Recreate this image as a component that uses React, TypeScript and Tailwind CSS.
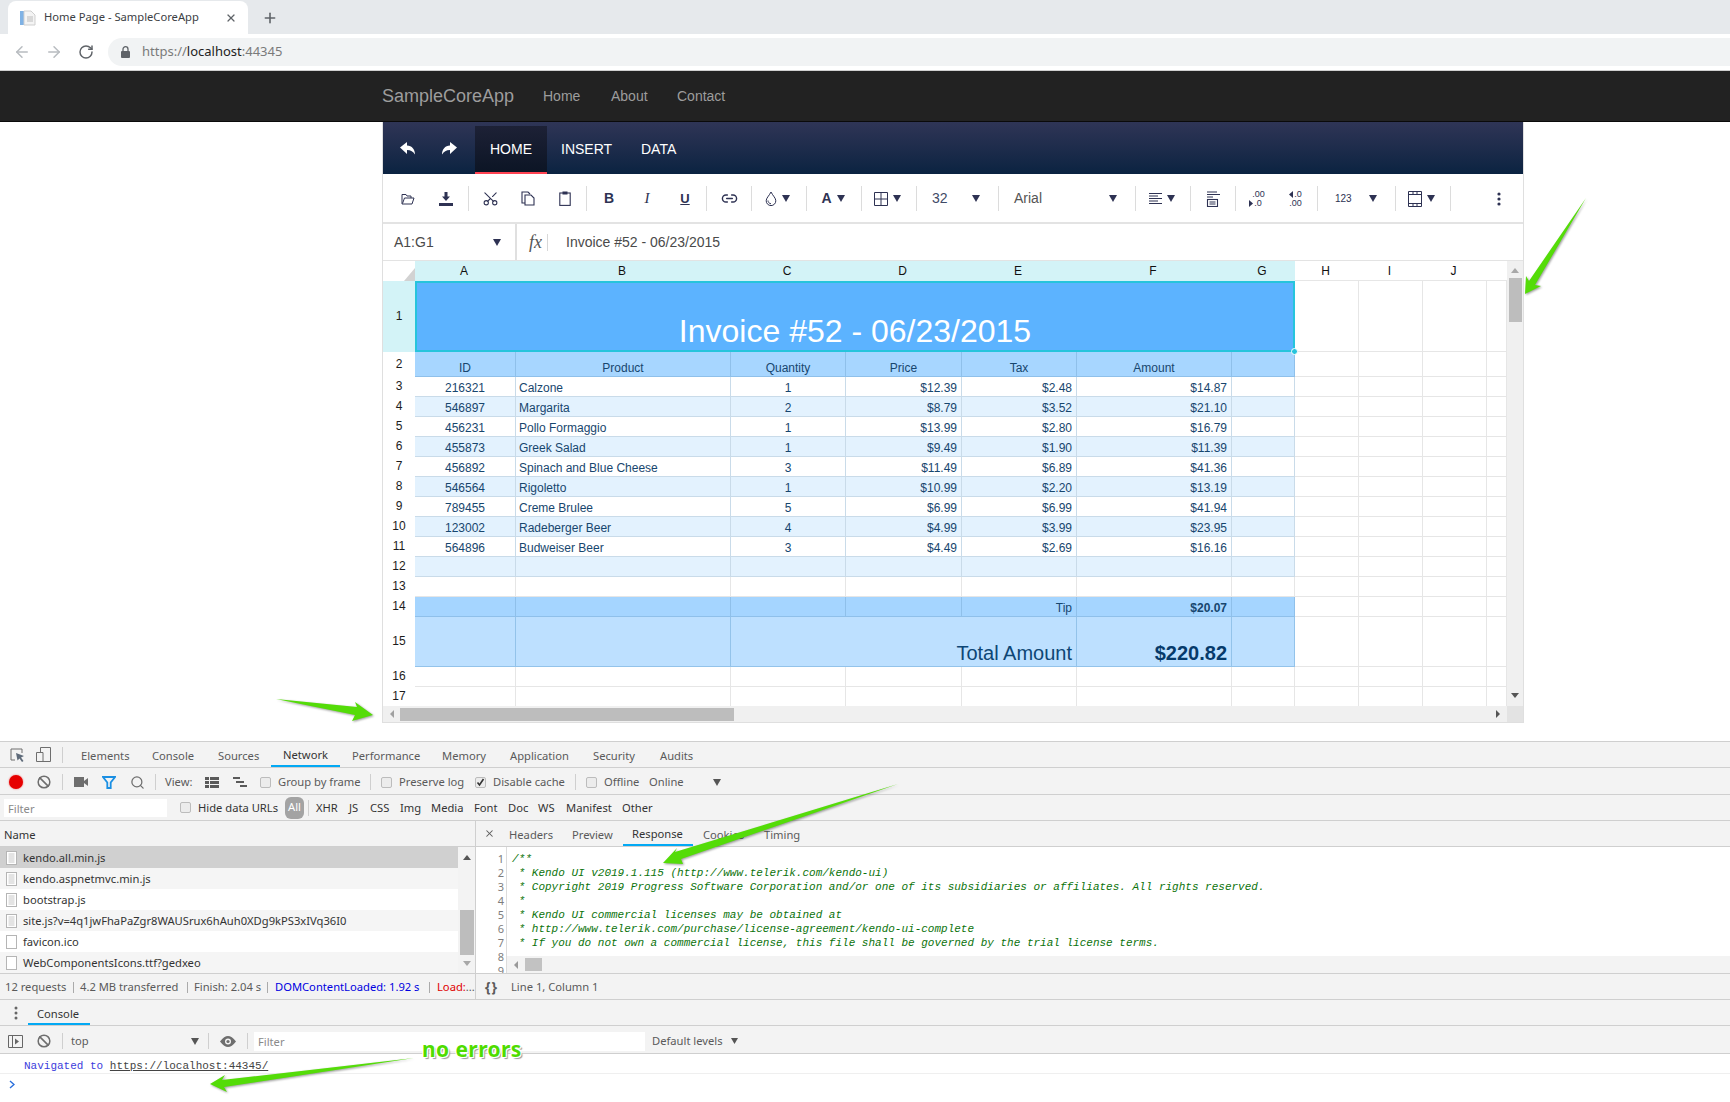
import React from "react";
import { ArrowLeft, ArrowRight, RotateCw, X, Plus, Ban, Search, Scissors, Link2 } from "lucide-react";

const ink = "#2e3253";
const cols = "grid grid-cols-[32px_101px_215px_115px_116px_115px_155px_63px_64px_64px_64px_20px]";
const right = "justify-end pr-[4px]";

const data = [
  ["216321", "Calzone", "1", "$12.39", "$2.48", "$14.87"],
  ["546897", "Margarita", "2", "$8.79", "$3.52", "$21.10"],
  ["456231", "Pollo Formaggio", "1", "$13.99", "$2.80", "$16.79"],
  ["455873", "Greek Salad", "1", "$9.49", "$1.90", "$11.39"],
  ["456892", "Spinach and Blue Cheese", "3", "$11.49", "$6.89", "$41.36"],
  ["546564", "Rigoletto", "1", "$10.99", "$2.20", "$13.19"],
  ["789455", "Creme Brulee", "5", "$6.99", "$6.99", "$41.94"],
  ["123002", "Radeberger Beer", "4", "$4.99", "$3.99", "$23.95"],
  ["564896", "Budweiser Beer", "3", "$4.49", "$2.69", "$16.16"],
];

function Tri({ className = "" }: { className?: string }) {
  return (
    <svg width="8" height="7" viewBox="0 0 8 7" className={"shrink-0 " + className}>
      <path d="M0 0H8L4 7Z" fill={ink} />
    </svg>
  );
}

function Sep() {
  return <div className="w-px h-[25px] bg-[#dcdcdc] shrink-0 mx-[2px]" />;
}

function Btn({ className, children }: { className: string; children: React.ReactNode }) {
  return <div className={"h-full flex items-center justify-center shrink-0 " + className}>{children}</div>;
}

function Toolbar() {
  return (
    <div className="h-[50px] border-b-2 border-[#e3e3e3] flex items-center pt-[1px] pl-[6px] bg-white shrink-0 text-[#555] [font-family:'Liberation_Sans',sans-serif]">
      <Btn className="w-[38px]">
        <svg width="14" height="12" viewBox="0 0 14 12" fill="none" stroke={ink} strokeWidth="1">
          <path d="M1 11V1.5H5L6 3H10V5M1 11H11L13 5H3.5L1.5 10.5" />
        </svg>
      </Btn>
      <Btn className="w-[38px]">
        <svg width="14" height="14" viewBox="0 0 14 14" fill={ink}>
          <path d="M5.5 0H8.5V4.5H11L7 9L3 4.5H5.5Z" />
          <rect x="0" y="11" width="14" height="3" />
        </svg>
      </Btn>
      <div className="mx-[1px] flex"><Sep /></div>
      <Btn className="w-[37px]">
        <Scissors size={17} strokeWidth={1.5} color={ink} className="rotate-[-90deg]" />
      </Btn>
      <Btn className="w-[37px]">
        <svg width="14" height="15" viewBox="0 0 14 15" fill="none" stroke={ink} strokeWidth="1.1">
          <path d="M4 12H1V1H7L9 3" />
          <path d="M4 4H10L13 7V14H4Z" />
        </svg>
      </Btn>
      <Btn className="w-[37px]">
        <svg width="12" height="15" viewBox="0 0 12 15" fill="none" stroke={ink} strokeWidth="1.1">
          <rect x="0.8" y="2" width="10.4" height="12.4" />
          <rect x="3.5" y="0.5" width="5" height="3" fill={ink} stroke="none" />
        </svg>
      </Btn>
      <div className="mx-[1px] flex"><Sep /></div>
      <Btn className="w-[38px] font-bold text-[14px] text-[#2e3253]">B</Btn>
      <Btn className="w-[38px] italic text-[15px] text-[#2e3253] [font-family:'Liberation_Serif',serif]">I</Btn>
      <Btn className="w-[38px] font-bold text-[13px] text-[#2e3253] underline">U</Btn>
      <Sep />
      <Btn className="w-[40px]"><Link2 size={17} strokeWidth={2} color={ink} /></Btn>
      <Sep />
      <Btn className="w-[50px] gap-[5px] pr-[3px]">
        <svg width="12" height="15" viewBox="0 0 12 15" fill="none" stroke={ink} strokeWidth="1">
          <path d="M6 1C4 5 1.2 7 1.2 9.8A4.8 4.8 0 0 0 10.8 9.8C10.8 7 8 5 6 1Z" />
          <path d="M3 9.5C3 11 4 12.5 6 12.8" />
        </svg>
        <Tri />
      </Btn>
      <Sep />
      <Btn className="w-[50px] gap-[5px] pr-[2px]">
        <span className="font-bold text-[14px] text-[#2e3253]">A</span>
        <Tri />
      </Btn>
      <Sep />
      <Btn className="w-[50px] gap-[5px] pr-[3px]">
        <svg width="14" height="14" viewBox="0 0 14 14" fill="none" stroke={ink} strokeWidth="1">
          <path d="M0.5 0.5H13.5V13.5H0.5ZM7 0.5V13.5M0.5 7H13.5" />
        </svg>
        <Tri />
      </Btn>
      <Sep />
      <Btn className="w-[77px] !justify-start pl-[13px] text-[14px] text-[#3f4a66]">
        <span className="w-[40px]">32</span>
        <Tri />
      </Btn>
      <Sep />
      <Btn className="w-[132px] !justify-start pl-[13px] text-[14px] text-[#555]">
        <span className="w-[95px]">Arial</span>
        <Tri />
      </Btn>
      <Sep />
      <Btn className="w-[50px] gap-[5px] pr-[2px]">
        <svg width="13" height="13" viewBox="0 0 13 13" stroke={ink} strokeWidth="1.2">
          <path d="M0 1.5H13M0 4H9M0 6.5H13M0 9H9M0 11.5H13" />
        </svg>
        <Tri />
      </Btn>
      <Sep />
      <Btn className="w-[40px]">
        <svg width="14" height="16" viewBox="0 0 14 16" fill="none" stroke={ink} strokeWidth="1.1">
          <path d="M1 1H11M1 3.5H14M1 6H7" />
          <rect x="1.5" y="8.5" width="10" height="7" />
          <path d="M3.5 11H9.5M3.5 13H9.5" />
        </svg>
      </Btn>
      <Sep />
      <Btn className="w-[38px] text-[9px] leading-[9px] text-[#2e3253]">
        <div className="flex flex-col items-start">
          <span className="pl-[3px]">.00</span>
          <span className="flex items-center">
            <svg width="4" height="7" viewBox="0 0 4 7" className="mr-[1px]"><path d="M0 0L4 3.5L0 7Z" fill={ink} /></svg>
            .0
          </span>
        </div>
      </Btn>
      <Btn className="w-[39px] text-[9px] leading-[9px] text-[#2e3253]">
        <div className="flex flex-col items-start">
          <span className="flex items-center">
            <svg width="4" height="7" viewBox="0 0 4 7" className="mr-[1px]"><path d="M4 0L0 3.5L4 7Z" fill={ink} /></svg>
            .0
          </span>
          <span>.00</span>
        </div>
      </Btn>
      <Sep />
      <Btn className="w-[73px] !justify-start pl-[15px] text-[10px] text-[#2e3253]">
        <span className="w-[34px]">123</span>
        <Tri />
      </Btn>
      <Sep />
      <Btn className="w-[50px] gap-[5px] pr-[4px]">
        <svg width="14" height="16" viewBox="0 0 14 16" fill="none" stroke={ink} strokeWidth="1">
          <path d="M0.5 0.5H13.5V15.5H0.5ZM0.5 3.5H13.5M0.5 12.5H13.5M5 0.5V3.5M9 0.5V3.5M5 12.5V15.5M9 12.5V15.5" />
        </svg>
        <Tri />
      </Btn>
      <Sep />
      <Btn className="w-[92px]">
        <svg width="4" height="14" viewBox="0 0 4 14" fill={ink}>
          <circle cx="2" cy="2" r="1.6" />
          <circle cx="2" cy="7" r="1.6" />
          <circle cx="2" cy="12" r="1.6" />
        </svg>
      </Btn>
    </div>
  );
}

function Blank({ n = 4 }: { n?: number }) {
  return (
    <>
      {Array.from({ length: n }).map((_, i) => (
        <div key={i} className="border-r border-b border-[#e6e6e6] bg-white" />
      ))}
    </>
  );
}

function Label({ children }: { children: React.ReactNode }) {
  return <div className="flex items-center justify-center pb-[2px] text-[12px] text-[#1c1c1c]">{children}</div>;
}

function Cell({
  bg,
  line,
  align = "",
  className = "",
  children,
}: {
  bg: string;
  line: string;
  align?: string;
  className?: string;
  children?: React.ReactNode;
}) {
  return (
    <div className={"flex items-end pl-[3px] pr-[3px] overflow-hidden whitespace-nowrap text-[12px] leading-[15px] text-[#17466e] border-r border-b " + bg + " " + line + " " + align + " " + className}>
      {children}
    </div>
  );
}

function Sheet() {
  return (
    <div className="flex flex-1 min-h-0 overflow-hidden">
      <div className="w-[1124px] overflow-hidden">
        <div className={cols + " h-[20px]"}>
          <div className="relative bg-white">
            <svg width="11" height="13" viewBox="0 0 11 13" className="absolute right-0 bottom-0">
              <path d="M11 0V13H0Z" fill="#d2d2d2" />
            </svg>
          </div>
          {["A", "B", "C", "D", "E", "F", "G"].map((c) => (
            <div key={c} className="bg-[#d3f3f7] flex items-center justify-center pr-[3px] text-[12px] text-[#111]">{c}</div>
          ))}
          {["H", "I", "J", ""].map((c, i) => (
            <div key={i} className="bg-white border-b border-[#e6e6e6] flex items-center justify-center pr-[3px] text-[12px] text-[#111]">{c}</div>
          ))}
        </div>
        <div className={cols + " h-[71px]"}>
          <div className="bg-[#d3f3f7] flex items-center justify-center pb-[2px] text-[12px] text-[#1c1c1c]">1</div>
          <div className="col-span-7 relative bg-[#5cb3ff] border-2 border-[#26c4dc] flex items-end justify-center text-white text-[32px] leading-[37px]">
            Invoice #52 - 06/23/2015
            <div className="absolute -right-[5px] -bottom-[5px] w-[7px] h-[7px] rounded-full bg-[#26c4dc] border border-white" />
          </div>
          <Blank />
        </div>
        <div className={cols + " h-[25px]"}>
          <Label>2</Label>
          {["ID", "Product", "Quantity", "Price", "Tax", "Amount", ""].map((h, i) => (
            <Cell key={i} bg="bg-[#a7d6ff]" line="border-[#8fc0ea]" align="justify-center">{h}</Cell>
          ))}
          <Blank />
        </div>
        {data.map((r, i) => {
          const bg = i % 2 ? "bg-[#e3f2fe]" : "bg-white";
          const line = "border-[#c9dbe9]";
          return (
            <div key={r[0]} className={cols + " h-[20px]"}>
              <Label>{i + 3}</Label>
              <Cell bg={bg} line={line} align="justify-center">{r[0]}</Cell>
              <Cell bg={bg} line={line}>{r[1]}</Cell>
              <Cell bg={bg} line={line} align="justify-center">{r[2]}</Cell>
              <Cell bg={bg} line={line} align={right}>{r[3]}</Cell>
              <Cell bg={bg} line={line} align={right}>{r[4]}</Cell>
              <Cell bg={bg} line={line} align={right}>{r[5]}</Cell>
              <Cell bg={bg} line={line} />
              <Blank />
            </div>
          );
        })}
        <div className={cols + " h-[20px]"}>
          <Label>12</Label>
          {[0, 1, 2, 3, 4, 5, 6].map((i) => (
            <Cell key={i} bg="bg-[#e3f2fe]" line="border-[#c9dbe9]" />
          ))}
          <Blank />
        </div>
        <div className={cols + " h-[20px]"}>
          <Label>13</Label>
          <Blank n={7} />
          <Blank />
        </div>
        <div className={cols + " h-[20px]"}>
          <Label>14</Label>
          {[0, 1, 2, 3].map((i) => (
            <Cell key={i} bg="bg-[#a5d5ff]" line="border-[#8fc0ea]" />
          ))}
          <Cell bg="bg-[#a5d5ff]" line="border-[#8fc0ea]" align={right}>Tip</Cell>
          <Cell bg="bg-[#a5d5ff]" line="border-[#8fc0ea]" align={right} className="font-bold">$20.07</Cell>
          <Cell bg="bg-[#a5d5ff]" line="border-[#8fc0ea]" />
          <Blank />
        </div>
        <div className={cols + " h-[50px]"}>
          <Label>15</Label>
          <Cell bg="bg-[#bde0ff]" line="border-[#93c3ea]" />
          <Cell bg="bg-[#bde0ff]" line="border-[#93c3ea]" />
          <Cell bg="bg-[#bde0ff]" line="border-[#93c3ea]" align={right} className="col-span-3 !text-[20px] !leading-[26px] !text-[#0d4675]">Total Amount</Cell>
          <Cell bg="bg-[#bde0ff]" line="border-[#93c3ea]" align={right} className="font-bold !text-[20px] !leading-[26px] !text-[#063a6b]">$220.82</Cell>
          <Cell bg="bg-[#bde0ff]" line="border-[#93c3ea]" />
          <Blank />
        </div>
        {[16, 17].map((n) => (
          <div key={n} className={cols + " h-[20px]"}>
            <Label>{n}</Label>
            <Blank n={7} />
            <Blank />
          </div>
        ))}
      </div>
      <div className="w-[16px] bg-[#f0f0f0] flex flex-col items-center">
        <svg width="8" height="5" viewBox="0 0 8 5" className="mt-[7px] shrink-0"><path d="M0 5H8L4 0Z" fill="#a8a8a8" /></svg>
        <div className="w-[13px] h-[44px] bg-[#bdbdbd] mt-[5px] shrink-0" />
        <svg width="8" height="5" viewBox="0 0 8 5" className="mt-[371px] shrink-0"><path d="M0 0H8L4 5Z" fill="#555" /></svg>
      </div>
    </div>
  );
}

function SpreadSheet() {
  return (
    <div className="ml-[382px] w-[1142px] h-[601px] flex flex-col border-x border-b border-[#dfdfdf] shrink-0 [font-family:'Liberation_Sans',sans-serif]">
      <div className="h-[52px] flex shrink-0 bg-gradient-to-b from-[#2f3556] to-[#0a2341] text-white text-[14px]">
        <div className="w-[92px] flex items-center pl-[4px] shrink-0">
          <div className="w-[42px] flex justify-center -ml-[1px]">
            <svg width="15" height="13" viewBox="0 0 15 13" fill="white"><path d="M0 5.5L7 0V3.5C12 3.7 15 7.5 15 12.5C13 9.5 11 8 7 8V12Z" /></svg>
          </div>
          <div className="w-[42px] flex justify-center">
            <svg width="15" height="13" viewBox="0 0 15 13" fill="white"><path d="M15 5.5L8 0V3.5C3 3.7 0 7.5 0 12.5C2 9.5 4 8 8 8V12Z" /></svg>
          </div>
        </div>
        <div className="w-[72px] h-[49px] mt-[4px] bg-gradient-to-b from-[#1d2136] to-[#0c1525] border-b-[3px] border-[#ff4352] flex items-center justify-center shrink-0">HOME</div>
        <div className="w-[94px] pl-[14px] pt-[2px] flex items-center shrink-0">INSERT</div>
        <div className="flex items-center pt-[2px]">DATA</div>
      </div>
      <Toolbar />
      <div className="h-[37px] flex border-b border-[#e3e3e3] shrink-0 bg-white text-[14px] text-[#4a4a4a]">
        <div className="w-[134px] border-r-2 border-[#e0e0e0] flex items-center pl-[11px] pr-[14px] justify-between shrink-0">
          A1:G1
          <Tri />
        </div>
        <div className="w-[33px] flex items-center pl-[12px] italic text-[18px] text-[#555] [font-family:'Liberation_Serif',serif] shrink-0">
          <span className="border-r border-[#d8d8d8] pr-[5px] leading-[17px]">fx</span>
        </div>
        <div className="flex items-center pl-[16px]">Invoice #52 - 06/23/2015</div>
      </div>
      <Sheet />
      <div className="h-[16px] flex shrink-0 bg-[#f0f0f0]">
        <div className="w-[1124px] flex items-center">
          <svg width="4" height="8" viewBox="0 0 4 8" className="ml-[7px]"><path d="M4 0V8L0 4Z" fill="#a0a0a0" /></svg>
          <div className="w-[334px] h-[13px] bg-[#bdbdbd] ml-[6px]" />
          <svg width="4" height="8" viewBox="0 0 4 8" className="ml-[762px]"><path d="M0 0V8L4 4Z" fill="#555" /></svg>
        </div>
        <div className="w-[16px] bg-[#e3e3e3]" />
      </div>
    </div>
  );
}

function Check({ on = false, className = "" }: { on?: boolean; className?: string }) {
  return (
    <div className={"w-[11px] h-[11px] rounded-[2px] border border-[#bcbcbc] bg-[#ececec] shrink-0 flex items-center justify-center " + className}>
      {on && (
        <svg width="9" height="9" viewBox="0 0 9 9" fill="none" stroke="#333" strokeWidth="1.6"><path d="M1.5 4.5L3.5 7L7.5 1" /></svg>
      )}
    </div>
  );
}

function VSep({ className = "" }: { className?: string }) {
  return <div className={"w-px h-[16px] bg-[#cfcfcf] shrink-0 " + className} />;
}

function FileIcon({ lined }: { lined: boolean }) {
  return (
    <svg width="11" height="14" viewBox="0 0 11 14" fill="none" className="ml-[6px] shrink-0">
      <rect x="0.5" y="0.5" width="10" height="13" fill="white" stroke="#b5b5b5" />
      {lined && <path d="M2.5 3H8.5M2.5 5H8.5M2.5 7H8.5M2.5 9H8.5M2.5 11H8.5" stroke="#c8c8c8" />}
    </svg>
  );
}

const files = [
  ["kendo.all.min.js", "bg-[#d0d0d0]", true],
  ["kendo.aspnetmvc.min.js", "bg-[#f5f5f5]", true],
  ["bootstrap.js", "bg-white", true],
  ["site.js?v=4q1jwFhaPaZgr8WAUSrux6hAuh0XDg9kPS3xIVq36I0", "bg-[#f5f5f5]", true],
  ["favicon.ico", "bg-white", false],
  ["WebComponentsIcons.ttf?gedxeo", "bg-[#f5f5f5]", false],
] as const;

const code = [
  "/**",
  " * Kendo UI v2019.1.115 (http://www.telerik.com/kendo-ui)",
  " * Copyright 2019 Progress Software Corporation and/or one of its subsidiaries or affiliates. All rights reserved.",
  " *",
  " * Kendo UI commercial licenses may be obtained at",
  " * http://www.telerik.com/purchase/license-agreement/kendo-ui-complete",
  " * If you do not own a commercial license, this file shall be governed by the trial license terms.",
];

function DevTools() {
  return (
    <div className="flex flex-col text-[11.2px] text-[#5a5a5a] bg-[#f3f3f3] [font-family:'Noto_Sans',sans-serif] flex-1 min-h-0">
      <div className="h-[27px] border-y border-[#cfcfcf] flex items-center shrink-0">
        <svg width="15" height="14" viewBox="0 0 15 14" fill="none" className="ml-[10px] shrink-0">
          <path d="M5 12H1V1H12V5" stroke="#6e6e6e" />
          <path d="M6 5L14 8L11 9.5L13.5 13L12 14L9.5 10.5L7.5 12.5Z" fill="#5f6b7a" />
        </svg>
        <svg width="15" height="15" viewBox="0 0 15 15" fill="none" stroke="#6e6e6e" className="ml-[11px] shrink-0">
          <path d="M4.5 5V0.5H14.5V14.5H0.5V5.5H7V14.5" />
        </svg>
        <VSep className="ml-[11px] mr-[6px]" />
        {[
          ["Elements", "w-[71px]"],
          ["Console", "w-[66px]"],
          ["Sources", "w-[65px]"],
          ["Network", "w-[69px] border-b-2 border-[#03a9f4] text-[#333]"],
          ["Performance", "w-[90px]"],
          ["Memory", "w-[68px]"],
          ["Application", "w-[83px]"],
          ["Security", "w-[67px]"],
          ["Audits", "w-[60px]"],
        ].map(([t, c]) => (
          <div key={t} className={"h-full flex items-center pl-[12px] pt-[4px] shrink-0 " + c}>{t}</div>
        ))}
      </div>
      <div className="h-[27px] border-b border-[#cfcfcf] flex items-center pt-[2px] shrink-0">
        <div className="ml-[9px] w-[14px] h-[14px] rounded-full bg-[#e60000] shadow-[0_0_2px_#f06060] shrink-0" />
        <Ban size={14} strokeWidth={2.6} color="#6e6e6e" className="ml-[14px] shrink-0" />
        <VSep className="ml-[11px]" />
        <svg width="14" height="10" viewBox="0 0 14 10" fill="#6e6e6e" className="ml-[11px] shrink-0"><rect width="10" height="10" y="0" /><path d="M10 4L14 1V9L10 6Z" /></svg>
        <svg width="14" height="13" viewBox="0 0 14 13" fill="none" stroke="#1a8fe3" strokeWidth="1.8" className="ml-[14px] shrink-0"><path d="M1 1H13L8.7 6.5V12H5.3V6.5Z" /></svg>
        <Search size={15} strokeWidth={2} color="#6e6e6e" className="ml-[14px] shrink-0" />
        <VSep className="ml-[10px]" />
        <div className="ml-[9px] w-[34px] shrink-0">View:</div>
        <svg width="14" height="11" viewBox="0 0 14 11" fill="#5a5a5a" className="ml-[6px] shrink-0"><path d="M0 0H4V3H0ZM5 0H14V3H5ZM0 4H4V7H0ZM5 4H14V7H5ZM0 8H4V11H0ZM5 8H14V11H5Z" /></svg>
        <svg width="14" height="10" viewBox="0 0 14 10" fill="#5a5a5a" className="ml-[14px] shrink-0"><path d="M0 0H7V2H0ZM3 4H11V6H3ZM7 8H14V10H7Z" /></svg>
        <Check className="ml-[13px]" />
        <div className="ml-[7px] w-[84px] shrink-0 whitespace-nowrap">Group by frame</div>
        <VSep className="ml-[8px]" />
        <Check className="ml-[10px]" />
        <div className="ml-[7px] w-[66px] shrink-0 whitespace-nowrap">Preserve log</div>
        <Check on className="ml-[10px]" />
        <div className="ml-[7px] w-[74px] shrink-0 whitespace-nowrap">Disable cache</div>
        <VSep className="ml-[8px]" />
        <Check className="ml-[10px]" />
        <div className="ml-[7px] w-[38px] shrink-0">Offline</div>
        <div className="ml-[7px] w-[60px] shrink-0">Online</div>
        <svg width="8" height="7" viewBox="0 0 8 7" className="ml-[4px] shrink-0"><path d="M0 0H8L4 7Z" fill="#555" /></svg>
      </div>
      <div className="h-[26px] border-b border-[#cfcfcf] flex items-center shrink-0 text-[#333]">
        <div className="ml-[4px] w-[163px] h-[18px] bg-white pl-[4px] pt-[1px] text-[#8a8a8a] leading-[18px] shrink-0">Filter</div>
        <Check className="ml-[13px]" />
        <div className="ml-[7px] w-[87px] pt-[2px] shrink-0 whitespace-nowrap">Hide data URLs</div>
        <div className="w-[19px] h-[22px] rounded-[6px] bg-[#a3a3a3] text-white flex items-center justify-center shrink-0">All</div>
        <VSep className="ml-[4px]" />
        <div className="flex ml-[7px] pt-[2px]">
          {[
            ["XHR", "w-[33px]"],
            ["JS", "w-[21px]"],
            ["CSS", "w-[30px]"],
            ["Img", "w-[31px]"],
            ["Media", "w-[43px]"],
            ["Font", "w-[34px]"],
            ["Doc", "w-[30px]"],
            ["WS", "w-[28px]"],
            ["Manifest", "w-[56px]"],
            ["Other", "w-[40px]"],
          ].map(([t, c]) => (
            <div key={t} className={"shrink-0 " + c}>{t}</div>
          ))}
        </div>
      </div>
      <div className="flex h-[152px] shrink-0">
        <div className="w-[476px] border-r border-[#cfcfcf] flex flex-col shrink-0">
          <div className="h-[26px] border-b border-[#cfcfcf] flex items-center pl-[4px] pt-[4px] text-[#333] shrink-0">Name</div>
          <div className="flex flex-1">
            <div className="w-[458px]">
              {files.map(([n, bg, lined]) => (
                <div key={n} className={"h-[21px] flex items-center gap-[6px] pt-[1px] text-[#333] whitespace-nowrap " + bg}>
                  <FileIcon lined={lined} />
                  {n}
                </div>
              ))}
            </div>
            <div className="w-[17px] flex flex-col items-center">
              <svg width="8" height="5" viewBox="0 0 8 5" className="mt-[8px] shrink-0"><path d="M0 5H8L4 0Z" fill="#555" /></svg>
              <div className="w-[14px] h-[45px] bg-[#bdbdbd] mt-[50px] shrink-0" />
              <svg width="8" height="5" viewBox="0 0 8 5" className="mt-[6px] shrink-0"><path d="M0 0H8L4 5Z" fill="#a8a8a8" /></svg>
            </div>
          </div>
        </div>
        <div className="flex-1 flex flex-col min-w-0">
          <div className="h-[26px] border-b border-[#cfcfcf] flex items-center shrink-0">
            <X size={11} strokeWidth={2.2} color="#5a5a5a" className="ml-[8px] shrink-0" />
            <div className="ml-[2px] w-[63px] h-full flex items-center pl-[12px] pt-[4px] shrink-0">Headers</div>
            <div className="w-[63px] h-full flex items-center pl-[12px] pt-[4px] shrink-0">Preview</div>
            <div className="w-[70px] h-full flex items-center pl-[9px] pt-[4px] border-b-2 border-[#03a9f4] text-[#333] shrink-0">Response</div>
            <div className="w-[61px] h-full flex items-center pl-[10px] pt-[4px] shrink-0">Cookies</div>
            <div className="h-full flex items-center pl-[10px] pt-[4px]">Timing</div>
          </div>
          <div className="flex flex-1 min-h-0 bg-white overflow-hidden">
            <div className="w-[31px] border-r border-[#dcdcdc] text-right pr-[2px] pt-[5px] text-[#7d7d7d] text-[11px] leading-[14px] shrink-0 overflow-hidden">
              {[1, 2, 3, 4, 5, 6, 7, 8, 9].map((n) => (
                <div key={n}>{n}</div>
              ))}
            </div>
            <div className="flex-1 flex flex-col min-w-0">
              <div className="flex-1 pl-[5px] pt-[5px] italic text-[#0b730b] text-[11px] leading-[14px] whitespace-pre [font-family:'Liberation_Mono',monospace] overflow-hidden">
                {code.map((c, i) => (
                  <div key={i}>{c}</div>
                ))}
              </div>
              <div className="h-[17px] bg-[#f3f3f3] flex items-center shrink-0">
                <svg width="4" height="8" viewBox="0 0 4 8" className="ml-[7px] shrink-0"><path d="M4 0V8L0 4Z" fill="#999" /></svg>
                <div className="w-[17px] h-[13px] bg-[#c2c2c2] ml-[7px] shrink-0" />
              </div>
            </div>
          </div>
        </div>
      </div>
      <div className="h-[27px] border-y border-[#cfcfcf] flex items-center shrink-0">
        <div className="w-[476px] border-r border-[#cfcfcf] h-full flex items-center shrink-0 whitespace-nowrap overflow-hidden pt-[1px]">
          <div className="ml-[5px] w-[68px] shrink-0">12 requests</div>
          <div className="w-px h-[11px] bg-[#aaa] shrink-0" />
          <div className="ml-[6px] w-[107px] shrink-0">4.2 MB transferred</div>
          <div className="w-px h-[11px] bg-[#aaa] shrink-0" />
          <div className="ml-[6px] w-[73px] shrink-0">Finish: 2.04 s</div>
          <div className="w-px h-[11px] bg-[#aaa] shrink-0" />
          <div className="ml-[7px] w-[154px] text-[#0000e0] shrink-0">DOMContentLoaded: 1.92 s</div>
          <div className="w-px h-[11px] bg-[#aaa] shrink-0" />
          <div className="ml-[7px] text-[#e00000] shrink-0">Load:</div>
          <div>...</div>
        </div>
        <div className="ml-[9px] text-[14px] font-bold w-[16px] shrink-0 leading-none tracking-[1px]">{"{}"}</div>
        <div className="ml-[10px] pt-[1px]">Line 1, Column 1</div>
      </div>
      <div className="h-[26px] border-b border-[#cfcfcf] flex items-center shrink-0">
        <svg width="4" height="14" viewBox="0 0 4 14" fill="#666" className="ml-[14px] shrink-0">
          <circle cx="2" cy="2" r="1.5" /><circle cx="2" cy="7" r="1.5" /><circle cx="2" cy="12" r="1.5" />
        </svg>
        <div className="ml-[10px] w-[62px] h-full border-b-2 border-[#03a9f4] flex items-center pl-[9px] pt-[5px] text-[#333] shrink-0">Console</div>
      </div>
      <div className="h-[28px] border-b border-[#cfcfcf] flex items-center pt-[3px] shrink-0">
        <svg width="15" height="13" viewBox="0 0 15 13" fill="none" stroke="#666" className="ml-[8px] shrink-0">
          <path d="M0.5 0.5H14.5V12.5H0.5ZM4.5 0.5V12.5" />
          <path d="M7 3.5L11 6.5L7 9.5Z" fill="#666" stroke="none" />
        </svg>
        <Ban size={14} strokeWidth={2.6} color="#6e6e6e" className="ml-[14px] shrink-0" />
        <VSep className="ml-[11px]" />
        <div className="ml-[8px] w-[120px] shrink-0">top</div>
        <svg width="8" height="7" viewBox="0 0 8 7" className="shrink-0"><path d="M0 0H8L4 7Z" fill="#555" /></svg>
        <VSep className="ml-[9px]" />
        <svg width="16" height="11" viewBox="0 0 16 11" className="ml-[11px] shrink-0">
          <path d="M0 5.5C3 1.5 5.5 0 8 0S13 1.5 16 5.5C13 9.5 10.5 11 8 11S3 9.5 0 5.5Z" fill="#6e6e6e" />
          <circle cx="8" cy="5.5" r="3" fill="#f3f3f3" />
          <circle cx="8" cy="5.5" r="1.6" fill="#6e6e6e" />
        </svg>
        <VSep className="ml-[11px]" />
        <div className="ml-[6px] w-[391px] h-[19px] bg-white pl-[4px] text-[#8a8a8a] leading-[19px] shrink-0">Filter</div>
        <div className="ml-[7px] w-[79px] shrink-0 whitespace-nowrap">Default levels</div>
        <svg width="7" height="6" viewBox="0 0 7 6" className="shrink-0"><path d="M0 0H7L3.5 6Z" fill="#555" /></svg>
      </div>
      <div className="flex-1 bg-white [font-family:'Liberation_Mono',monospace] text-[11px]">
        <div className="h-[20px] border-b border-[#efefef] pl-[24px] pt-[5px] flex items-center whitespace-pre text-[#3c3cdc]">
          {"Navigated to "}
          <span className="text-[#444] underline">https://localhost:44345/</span>
        </div>
        <div className="pl-[9px] pt-[6px]">
          <svg width="6" height="9" viewBox="0 0 6 9" fill="none" stroke="#2a6fdc" strokeWidth="1.4"><path d="M1 1L5 4.5L1 8" /></svg>
        </div>
      </div>
    </div>
  );
}

function Browser() {
  return (
    <div className="shrink-0 [font-family:'Noto_Sans',sans-serif]">
      <div className="h-[34px] bg-[#e6e9ec] flex items-end pl-[8px]">
        <div className="w-[240px] h-[33px] bg-white rounded-t-[8px] flex items-center pl-[12px] shrink-0 text-[11.2px] text-[#3c4043]">
          <svg width="16" height="16" viewBox="0 0 16 16" className="shrink-0">
            <rect x="0" y="1" width="4" height="14" fill="#7fb2e5" />
            <path d="M4 1H11L15 5V15H4Z" fill="#f4f4f4" stroke="#cfcfcf" />
            <path d="M7 7H13M7 9H13M7 11H13" stroke="#bcbcbc" />
          </svg>
          <div className="ml-[8px] w-[178px] whitespace-nowrap overflow-hidden">Home Page - SampleCoreApp</div>
          <X size={12} strokeWidth={2.4} color="#5f6368" className="ml-[3px]" />
        </div>
        <Plus size={16} strokeWidth={2.4} color="#5f6368" className="ml-[14px] mb-[8px]" />
      </div>
      <div className="h-[37px] bg-white border-b border-[#cfcfcf] flex items-center pl-[13px]">
        <ArrowLeft size={18} strokeWidth={2} color="#b8bcc0" className="shrink-0" />
        <ArrowRight size={18} strokeWidth={2} color="#b8bcc0" className="ml-[14px] shrink-0" />
        <RotateCw size={16} strokeWidth={2.2} color="#5f6368" className="ml-[15px] shrink-0" />
        <div className="ml-[14px] flex-1 h-[28px] bg-[#f1f3f4] rounded-l-full flex items-center pl-[13px] text-[13px] text-[#7a7a7a]">
          <svg width="9" height="12" viewBox="0 0 9 12" className="shrink-0">
            <rect x="0" y="5" width="9" height="7" rx="1" fill="#5f6368" />
            <path d="M2 5.5V3.2A2.5 2.5 0 0 1 7 3.2V5.5" fill="none" stroke="#5f6368" strokeWidth="1.3" />
          </svg>
          <span className="ml-[12px] whitespace-nowrap">https://<span className="text-[#222]">localhost</span>:44345</span>
        </div>
      </div>
      <div className="h-[51px] bg-[#222] border-b border-[#0a0a0a] flex items-center pl-[382px] text-[14px] text-[#9d9d9d] [font-family:'Liberation_Sans',sans-serif]">
        <div className="w-[161px] text-[18px] shrink-0">SampleCoreApp</div>
        <div className="w-[68px] shrink-0">Home</div>
        <div className="w-[66px] shrink-0">About</div>
        <div>Contact</div>
      </div>
    </div>
  );
}

function Annotations() {
  return (
    <>
      <svg width="1730" height="1102" viewBox="0 0 1730 1102" className="absolute inset-0 pointer-events-none drop-shadow-[1px_1px_1px_rgba(0,0,0,0.4)]">
        <path d="M1586 198L1535 285L1541 286L1525 294L1526 276L1529 281Z" fill="#54dc08" />
        <path d="M276 699L357 707L355 702L373 715L352 721L355 715Z" fill="#54dc08" />
        <path d="M898 784L675 852L677 848L663 863L683 864L681 859Z" fill="#54dc08" />
        <path d="M414 1058L222 1080L225 1075L210 1084L227 1092L224 1087Z" fill="#54dc08" />
      </svg>
      <div className="absolute left-[422px] top-[1034px] text-[21px] leading-[30px] font-bold tracking-[0.4px] text-[#4fdc00] [font-family:'Noto_Sans',sans-serif] [text-shadow:-1px_-1px_0_#fff,1px_-1px_0_#fff,-1px_1px_0_#fff,1px_1px_0_#fff,2px_2px_1px_#999]">
        no errors
      </div>
    </>
  );
}

export default function App() {
  return (
    <div className="relative w-full h-[1102px] overflow-hidden bg-white flex flex-col">
      <Browser />
      <SpreadSheet />
      <div className="h-[18px] shrink-0" />
      <DevTools />
      <Annotations />
    </div>
  );
}
